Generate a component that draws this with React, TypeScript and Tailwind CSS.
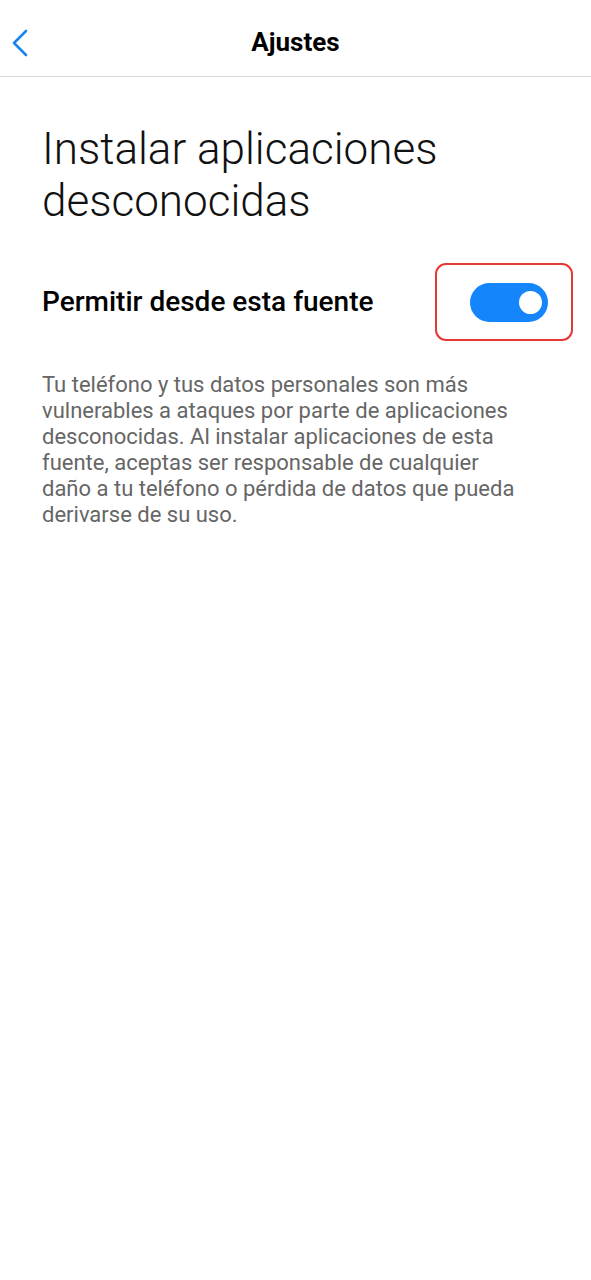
import { useState } from 'react';

export default function App() {
  const [enabled, setEnabled] = useState(true);

  return (
    <div className="min-h-screen w-full bg-white" style={{ fontFamily: 'Roboto, "Noto Sans", sans-serif' }}>
      <div className="relative flex h-[77px] items-center justify-center border-b border-[#d6d6d6] pt-[9px]">
        <button className="absolute left-[10px] top-[28px] flex h-[30px] w-[20px] items-center justify-center">
          <svg width="18" height="28" viewBox="0 0 18 28" fill="none">
            <path d="M15 2 L3 14 L15 26" stroke="#1a84f0" strokeWidth="2.6" strokeLinecap="round" strokeLinejoin="round" />
          </svg>
        </button>
        <h1 className="text-[26px] font-bold text-black">Ajustes</h1>
      </div>

      <div className="px-[42px] pt-[46px]">
        <h2 className="text-[44px] font-light leading-[52px] text-[#111]">Instalar aplicaciones desconocidas</h2>

        <div className="mt-[36px] flex items-center justify-between">
          <span className="text-[28px] font-medium text-black">Permitir desde esta fuente</span>
          <div className="-mr-[24px] flex h-[78px] w-[138px] shrink-0 items-center rounded-[11px] border-2 border-[#e53935] pl-[33px]">
            <button
              onClick={() => setEnabled(!enabled)}
              className={`flex h-[39px] w-[78px] items-center rounded-full px-[6px] ${enabled ? 'justify-end bg-[#1485fb]' : 'justify-start bg-[#cfcfcf]'}`}
            >
              <span className="h-[23px] w-[23px] rounded-full bg-white" />
            </button>
          </div>
        </div>

        <p className="mt-[31px] text-[22px] leading-[26px] text-[#666]">
          Tu teléfono y tus datos personales son más vulnerables a ataques por parte de aplicaciones desconocidas. Al instalar aplicaciones de esta fuente, aceptas ser responsable de cualquier
          <br />
          daño a tu teléfono o pérdida de datos que pueda derivarse de su uso.
        </p>
      </div>
    </div>
  );
}
